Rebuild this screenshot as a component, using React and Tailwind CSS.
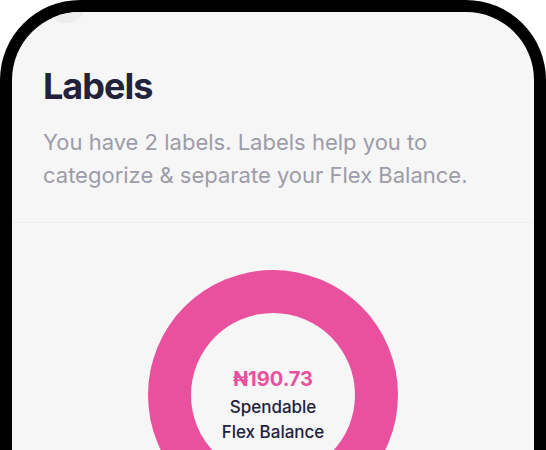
export default function App() {
  return (
    <div className="w-[546px] h-[450px] overflow-hidden bg-white" style={{ fontFamily: 'Inter, "Noto Sans", sans-serif' }}>
      {/* phone frame */}
      <div className="bg-black rounded-t-[80px] px-[12px] pt-[12px] h-[520px]">
        <div className="relative bg-[#f6f6f6] rounded-t-[68px] h-full overflow-hidden">
          {/* partially hidden status dot */}
          <div className="absolute left-[33px] top-[-31px] w-[42px] h-[42px] rounded-full bg-[#ececec]" />

          <div className="pl-[31px] pr-[20px] pt-[52px] pb-[30px]">
            <h1 className="text-[36px] leading-[44px] font-bold text-[#22223a] tracking-[-1px]">Labels</h1>
            <p className="mt-[18px] text-[22px] leading-[33px] text-[#9d9ca8]">
              You have 2 labels. Labels help you to categorize &amp; separate your Flex Balance.
            </p>
          </div>
          <div className="h-px bg-[#eeeeee]" />

          <div className="flex justify-center pt-[47px]">
            <div className="w-[250px] h-[250px] rounded-full bg-[#e9519f] flex items-center justify-center">
              <div className="w-[164px] h-[164px] rounded-full bg-[#f6f6f6] flex flex-col items-center justify-center text-center pt-[20px]">
                <div className="text-[20px] leading-[26px] font-bold text-[#e9519f]">₦190.73</div>
                <div className="text-[17px] leading-[25px] font-medium text-[#22223a] mt-[3px]">Spendable</div>
                <div className="text-[17px] leading-[25px] font-medium text-[#22223a]">Flex Balance</div>
              </div>
            </div>
          </div>
        </div>
      </div>
    </div>
  );
}
